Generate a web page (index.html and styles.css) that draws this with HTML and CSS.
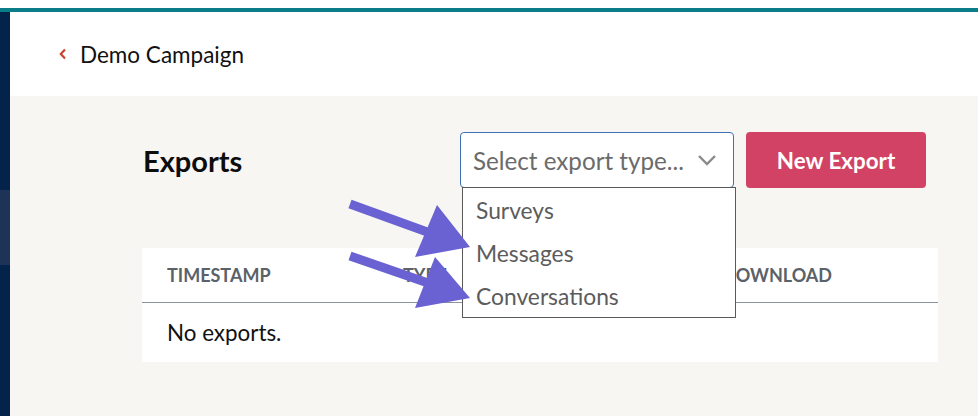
FILE: index.html
```html
<!DOCTYPE html>
<html lang="en">
<head>
<meta charset="utf-8">
<title>Exports</title>
<link rel="stylesheet" href="styles.css">
</head>
<body>
<div class="topstrip"></div>
<div class="app">
  <nav class="sidebar"><div class="side-active"></div></nav>
  <main class="main">
    <header class="pagehead">
      <a class="back" href="#">
        <svg class="back-icon" width="10" height="12" viewBox="0 0 10 12"><path d="M7 1.5 L2.8 6 L7 10.5" fill="none" stroke="#c8432f" stroke-width="2.2"/></svg>
        <span>Demo Campaign</span>
      </a>
    </header>
    <section class="content">
      <div class="toolbar">
        <h1 class="title">Exports</h1>
        <div class="actions">
          <div class="select-wrap">
            <div class="select">
              <span class="placeholder">Select export type...</span>
              <svg class="chev" width="20" height="12" viewBox="0 0 20 12"><path d="M2 2 L10 10 L18 2" fill="none" stroke="#8a8a8a" stroke-width="2.4"/></svg>
            </div>
            <ul class="dropdown">
              <li>Surveys</li>
              <li>Messages</li>
              <li>Conversations</li>
            </ul>
          </div>
          <button class="btn-primary">New Export</button>
        </div>
      </div>
      <div class="card">
        <div class="thead">
          <span>Timestamp</span>
          <span>Type</span>
          <span>Download</span>
        </div>
        <div class="tbody">No exports.</div>
      </div>
    </section>
  </main>
</div>
<svg class="arrows" width="978" height="416" viewBox="0 0 978 416">
  <g fill="#6a62d2" stroke="#6a62d2">
    <line x1="350" y1="204" x2="430" y2="233" stroke-width="9"/>
    <polygon points="437,205 470,247 415,257" stroke="none"/>
    <line x1="350" y1="256" x2="428" y2="283" stroke-width="9"/>
    <polygon points="435,257 470,298 415,308" stroke="none"/>
  </g>
</svg>
</body>
</html>
```
FILE: styles.css
```css
* { box-sizing: border-box; }
html, body { margin: 0; padding: 0; }
body {
  font-family: "Lato", "Noto Sans", sans-serif;
  background: #f7f6f3;
  width: 978px;
  height: 416px;
  overflow: hidden;
  position: relative;
}
.topstrip {
  height: 12px;
  background: #ffffff;
  border-bottom: 4px solid #0b7d88;
}
.app {
  display: flex;
  height: 404px;
}
.sidebar {
  width: 10px;
  flex: none;
  background: #03234b;
  padding-top: 178px;
}
.side-active {
  height: 75px;
  background: #1d3358;
}
.main {
  flex: 1;
  display: flex;
  flex-direction: column;
}
.pagehead {
  height: 84px;
  background: #ffffff;
  display: flex;
  align-items: center;
  padding-left: 48px;
}
.back {
  display: flex;
  align-items: center;
  gap: 12px;
  text-decoration: none;
  color: #111111;
  font-size: 22.5px;
}
.back-icon { display: block; }
.content {
  padding: 36px 40px 0 132px;
}
.toolbar {
  display: flex;
  align-items: center;
  justify-content: space-between;
  padding-right: 12px;
  height: 56px;
}
.title {
  margin: 0 0 0 1px;
  font-size: 29px;
  font-weight: 700;
  color: #0d0d0d;
}
.actions {
  display: flex;
  gap: 12px;
  align-items: center;
}
.select-wrap {
  position: relative;
  width: 274px;
}
.select {
  height: 56px;
  border: 1px solid #3f72b3;
  border-radius: 4px;
  background: #ffffff;
  display: flex;
  align-items: center;
  justify-content: space-between;
  padding: 0 16px 0 12px;
  font-size: 24.2px;
  color: #6b6b6b;
}
.chev { display: block; }
.dropdown {
  position: absolute;
  top: 55px;
  left: 2px;
  width: 274px;
  margin: 0;
  padding: 0;
  list-style: none;
  background: #ffffff;
  border: 1px solid #5a5a5a;
  z-index: 5;
}
.dropdown li {
  height: 43px;
  display: flex;
  align-items: center;
  padding-left: 13px;
  font-size: 22.8px;
  color: #5c5c5c;
}
.btn-primary {
  width: 180px;
  height: 56px;
  border: none;
  border-radius: 4px;
  background: #d14264;
  color: #ffffff;
  font-family: inherit;
  font-size: 22.4px;
  font-weight: 700;
}
.card {
  margin-top: 60px;
  background: #ffffff;
}
.thead {
  display: grid;
  grid-template-columns: 236px 319px 1fr;
  align-items: center;
  height: 55px;
  padding: 0 25px;
  border-bottom: 1px solid #8c939c;
}
.thead span {
  text-transform: uppercase;
  font-size: 18px;
  font-weight: 700;
  color: #5b6169;
}
.tbody {
  height: 59px;
  display: flex;
  align-items: center;
  padding-left: 25px;
  font-size: 22.4px;
  color: #111111;
}
.arrows {
  position: absolute;
  top: 0;
  left: 0;
  pointer-events: none;
  z-index: 10;
}
```
